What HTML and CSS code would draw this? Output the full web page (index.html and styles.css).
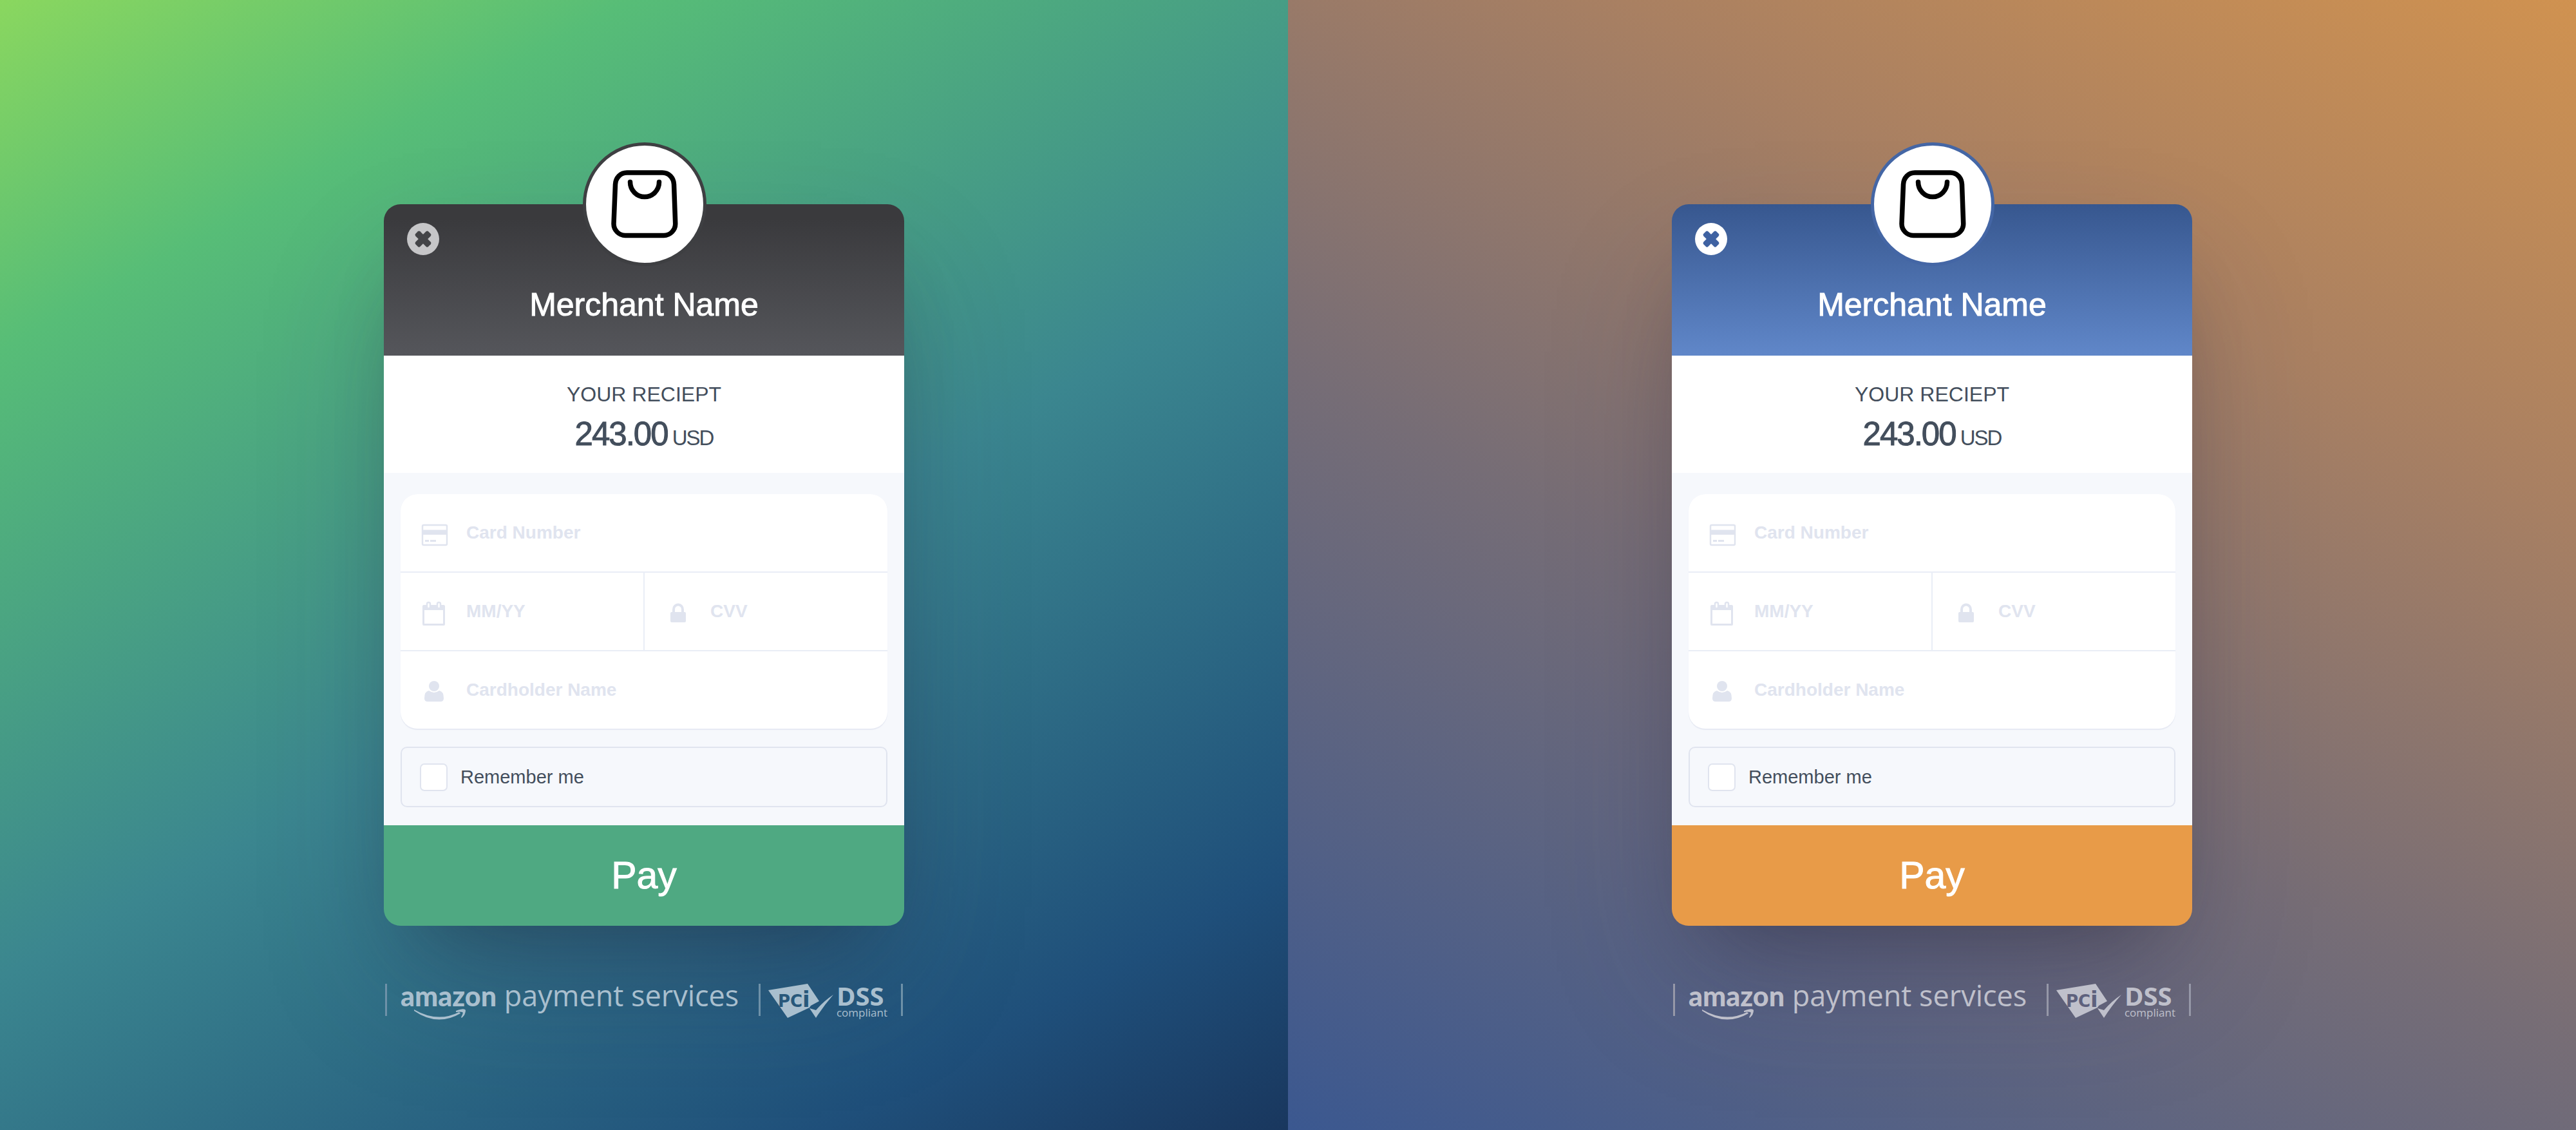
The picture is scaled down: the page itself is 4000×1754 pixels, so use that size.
FILE: index.html
```html
<!DOCTYPE html>
<html lang="en">
<head>
<meta charset="utf-8">
<title>Checkout</title>
<link rel="stylesheet" href="styles.css">
</head>
<body>
<svg class="sprite" aria-hidden="true">
  <symbol id="bag" viewBox="0 0 104 106">
    <path d="M24.500 4h55c10 0 17.500 8 18 18l2.200 61c.3 10-8 18.500-18 18.500H22c-10 0-18.300-8.500-18-18.500L6.500 22c.5-10 8-18 18-18Z" fill="none" stroke="#000" stroke-width="7.500"/>
    <path d="M29.500 18.500a22.500 23 0 0 0 45 0" fill="none" stroke="#000" stroke-width="7.500" stroke-linecap="round"/>
  </symbol>
  <symbol id="cross" viewBox="0 0 50 50">
    <circle cx="25" cy="25" r="25" fill="currentColor"/>
    <g fill="var(--cross)">
      <rect x="11" y="20" width="28" height="10" rx="2.500" transform="rotate(45 25 25)"/>
      <rect x="11" y="20" width="28" height="10" rx="2.500" transform="rotate(-45 25 25)"/>
    </g>
  </symbol>
  <symbol id="card" viewBox="0 0 48 40">
    <rect x="6" y="5" width="38" height="31" rx="2" fill="none" stroke="currentColor" stroke-width="2.500"/>
    <path d="M5 12.500h40v7.500H5zM10 28h6v3h-6zM18 28h9v3h-9z" fill="currentColor"/>
  </symbol>
  <symbol id="calendar" viewBox="0 0 48 40">
    <path d="M8 7h31a2 2 0 0 1 2 2v28a2 2 0 0 1-2 2H8a2 2 0 0 1-2-2V9a2 2 0 0 1 2-2zm1 8v21h29V15z" fill="currentColor" fill-rule="evenodd"/>
    <rect x="13" y="3" width="5" height="9.500" rx="2.500" fill="#fff" stroke="currentColor" stroke-width="2.500"/>
    <rect x="29" y="3" width="5" height="9.500" rx="2.500" fill="#fff" stroke="currentColor" stroke-width="2.500"/>
  </symbol>
  <symbol id="lock" viewBox="0 0 48 40">
    <rect x="12" y="18" width="24" height="16" rx="2" fill="currentColor"/>
    <path d="M17 19V14a7 7.500 0 0 1 14 0v5" fill="none" stroke="currentColor" stroke-width="4"/>
  </symbol>
  <symbol id="person" viewBox="0 0 48 40">
    <circle cx="24" cy="11" r="8" fill="currentColor"/>
    <path d="M16 18q8 6 16 0 7 1 7 12 0 5-5 5H14q-5 0-5-5Q9 19 16 18Z" fill="currentColor"/>
  </symbol>
  <symbol id="smile" viewBox="0 0 80 18">
    <path d="M0 1q36 21 70 4l2 2Q36 28 0 3ZM65 3q13-5 15-1 0 7-6 12l-1-1q4-7 2-8-3-1-10 0Z" fill="currentColor"/>
  </symbol>
  <symbol id="pci" viewBox="0 0 104 54">
    <path d="M0 10L61 0l18 27-13 7-2 3L30 53Z" fill="currentColor"/>
    <path d="M64 38l10 3Q86 27 101 17 86 34 74 53Z" fill="currentColor"/>
  </symbol>
</svg>
<main class="themes">
  <section class="panel panel-dark">
    <form class="checkout">
      <header class="head">
        <button class="close" type="button" aria-label="Close"><svg><use href="#cross"/></svg></button>
        <span class="logo"><svg><use href="#bag"/></svg></span>
        <h1>Merchant Name</h1>
      </header>
      <div class="receipt">
        <h2>YOUR RECIEPT</h2>
        <p class="amount">243.00 <small>USD</small></p>
      </div>
      <div class="details">
        <div class="fields">
          <label class="field wide"><svg><use href="#card"/></svg><input type="text" aria-label="Card Number" placeholder="Card Number"></label>
          <label class="field"><svg><use href="#calendar"/></svg><input type="text" aria-label="Expiry" placeholder="MM/YY"></label>
          <label class="field"><svg><use href="#lock"/></svg><input type="text" aria-label="CVV" placeholder="CVV"></label>
          <label class="field wide"><svg><use href="#person"/></svg><input type="text" aria-label="Cardholder Name" placeholder="Cardholder Name"></label>
        </div>
        <label class="remember"><input type="checkbox">Remember me</label>
      </div>
      <button class="pay" type="submit">Pay</button>
    </form>
    <footer class="trust">
      <p class="aps"><b>amazon<svg><use href="#smile"/></svg></b> payment services</p>
      <p class="pci"><span class="mark"><svg><use href="#pci"/></svg><b>PC<i>i</i></b></span><span class="dss"><b>DSS</b><small>compliant</small></span></p>
    </footer>
  </section>
  <section class="panel panel-blue">
    <form class="checkout">
      <header class="head">
        <button class="close" type="button" aria-label="Close"><svg><use href="#cross"/></svg></button>
        <span class="logo"><svg><use href="#bag"/></svg></span>
        <h1>Merchant Name</h1>
      </header>
      <div class="receipt">
        <h2>YOUR RECIEPT</h2>
        <p class="amount">243.00 <small>USD</small></p>
      </div>
      <div class="details">
        <div class="fields">
          <label class="field wide"><svg><use href="#card"/></svg><input type="text" aria-label="Card Number" placeholder="Card Number"></label>
          <label class="field"><svg><use href="#calendar"/></svg><input type="text" aria-label="Expiry" placeholder="MM/YY"></label>
          <label class="field"><svg><use href="#lock"/></svg><input type="text" aria-label="CVV" placeholder="CVV"></label>
          <label class="field wide"><svg><use href="#person"/></svg><input type="text" aria-label="Cardholder Name" placeholder="Cardholder Name"></label>
        </div>
        <label class="remember"><input type="checkbox">Remember me</label>
      </div>
      <button class="pay" type="submit">Pay</button>
    </form>
    <footer class="trust">
      <p class="aps"><b>amazon<svg><use href="#smile"/></svg></b> payment services</p>
      <p class="pci"><span class="mark"><svg><use href="#pci"/></svg><b>PC<i>i</i></b></span><span class="dss"><b>DSS</b><small>compliant</small></span></p>
    </footer>
  </section>
</main>
</body>
</html>
```
FILE: styles.css
```css
* { box-sizing: border-box; margin: 0; padding: 0; }
body { font-family: "Liberation Sans", Arial, sans-serif; color: #434e5c; }
input, button { font: inherit; color: inherit; border: 0; background: none; }
svg { display: block; }
.sprite { display: none; }

.themes { display: grid; grid-template-columns: 1fr 1fr; min-height: 100vh; }
.panel { display: flex; flex-direction: column; align-items: center; padding: 317px 24px 120px; }
.panel-dark {
  --head: linear-gradient(#3a3a3d 10%, #55565b);
  --ring: #3e3f42; --close: #c6c6c8; --cross: #434447; --pay: #4fa982; --mark: #28587a;
  --trust: #a9bfce; --bar: #6e91a8;
  background: linear-gradient(151deg, #8ad75f 0%, #57bd77 19%, #3b868f 53%, #1f4f7a 86%, #19375e 100%);
}
.panel-blue {
  --head: linear-gradient(#37578f, #6087c9);
  --ring: #4466a5; --close: #fff; --cross: #3f62a2; --pay: #e89b48; --mark: #5e617d;
  --trust: #bfc0cb; --bar: #9698a8;
  background: linear-gradient(208deg, #d09250 0%, #a98062 28%, #766d76 58%, #3b5890 100%);
}

.checkout { width: 100%; max-width: 808px; border-radius: 26px; box-shadow: 0 100px 200px -30px rgba(50, 50, 93, .28), 0 60px 120px -60px rgba(0, 0, 0, .3); }
.head { position: relative; height: 235px; padding-top: 131px; border-radius: 26px 26px 0 0; background: var(--head); color: #fff; text-align: center; }
.head h1 { font-size: 50px; line-height: 50px; font-weight: 400; -webkit-text-stroke: 1px; }
.logo { position: absolute; top: -96px; left: 50%; width: 192px; height: 192px; margin-left: -95px; display: grid; place-items: center; border: 5px solid var(--ring); border-radius: 50%; background: #fff; }
.logo svg { width: 104px; height: 106px; }
.close { position: absolute; top: 29px; left: 36px; width: 50px; height: 50px; color: var(--close); }
.close svg { width: 50px; height: 50px; }

.receipt { height: 182px; padding-top: 42px; background: #fff; text-align: center; }
.receipt h2 { font-size: 32px; line-height: 36px; font-weight: 400; }
.amount { margin-top: 16px; font-size: 51px; line-height: 56px; letter-spacing: -2px; -webkit-text-stroke: 1px; }
.amount small { font-size: 33px; margin-left: -5px; -webkit-text-stroke: 0; }

.details { padding: 33px 26px 28px; background: #f6f8fc; }
.fields { display: grid; grid-template-columns: repeat(2, minmax(0, 1fr)); gap: 2px; background: #e9edf6; border-radius: 26px; overflow: hidden; box-shadow: 0 2px 1px #e6e9f3; }
.field { display: flex; align-items: center; height: 120px; padding-left: 28px; background: #fff; color: #e0e4ef; }
.wide { grid-column: 1 / -1; }
.field svg { flex: none; width: 48px; height: 40px; margin-top: 6px; }
.field input { flex: 1; min-width: 0; margin-left: 26px; font-size: 28px; line-height: 32px; font-weight: 700; }
.field input::placeholder { color: #e0e4ef; opacity: 1; }
.remember { display: flex; align-items: center; gap: 20px; height: 94px; margin-top: 28px; padding-left: 28px; border: 2px solid #e0e4ef; border-radius: 10px; font-size: 29px; line-height: 36px; }
.remember input { appearance: none; width: 43px; height: 43px; border: 2px solid #e0e4ef; border-radius: 7px; background: #fff; }
.pay { display: block; width: 100%; height: 156px; border-radius: 0 0 26px 26px; background: var(--pay); color: #fff; font-size: 59px; line-height: 60px; -webkit-text-stroke: 1px; }

.trust { display: flex; justify-content: space-between; width: 100%; max-width: 808px; margin-top: 90px; padding: 0 2px; color: var(--trust); font-family: "Open Sans", sans-serif; white-space: nowrap; }
.aps { height: 50px; padding-left: 21px; border-left: 3px solid var(--bar); font-size: 45px; line-height: 36px; }
.aps b { position: relative; font-family: Lato, sans-serif; font-weight: 900; font-size: 43px; line-height: 36px; }
.aps svg { position: absolute; left: 21px; top: 46px; width: 80px; height: 18px; }
.pci { display: flex; height: 50px; padding: 0 21px 0 12px; border: solid var(--bar); border-width: 0 3px; }
.mark { position: relative; width: 104px; }
.mark svg { width: 104px; height: 54px; }
.mark b { position: absolute; left: 15px; top: 9px; color: var(--mark); font: 700 26px/30px "DejaVu Sans", sans-serif; }
.mark i { font-size: 34px; line-height: 30px; font-style: normal; }
.dss { display: flex; flex-direction: column; margin-left: 2px; }
.dss b { font-size: 40px; line-height: 38px; }
.dss small { font-size: 17px; line-height: 14px; }
```
